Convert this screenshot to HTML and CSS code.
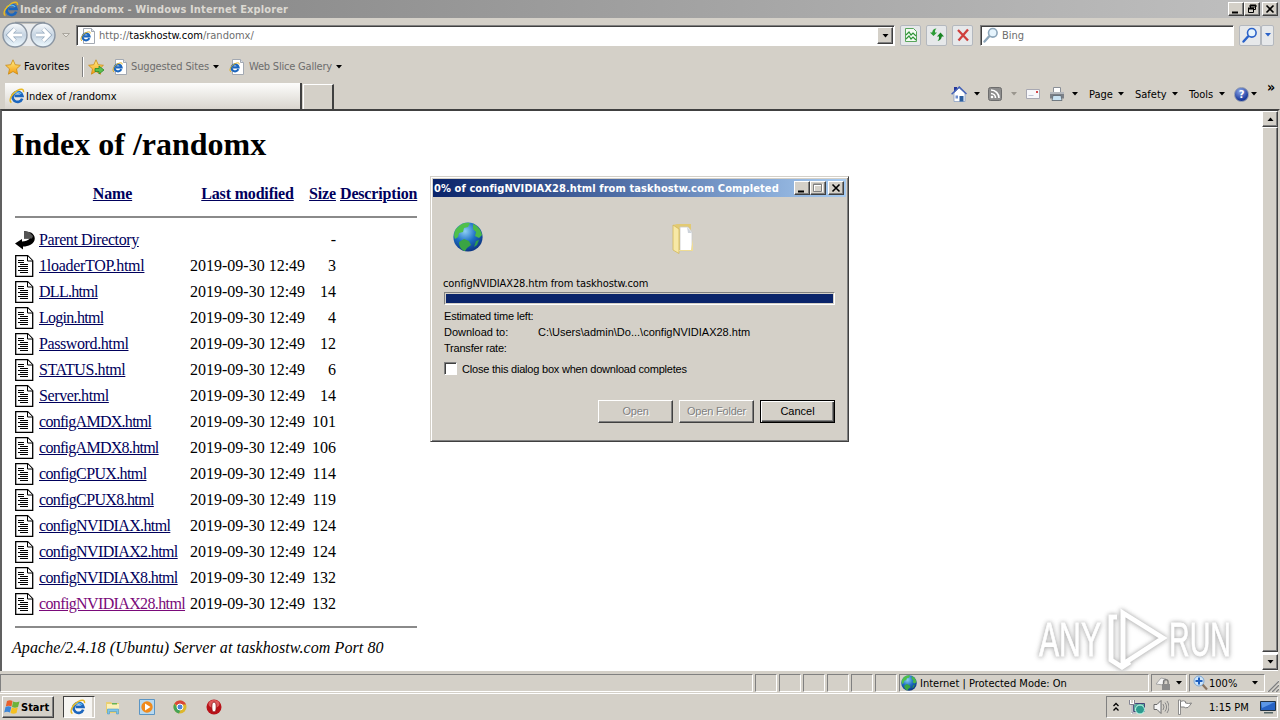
FILE: index.html
```
<!DOCTYPE html>
<html lang="en">
<head>
    <meta charset="UTF-8">
    <title>Index of /randomx</title>
    <link rel="stylesheet" href="styles.css">
</head>
<body>
    <!-- shared icons -->
    <svg class="sprite" width="0" height="0">
        <defs>
            <radialGradient id="ball" cx="40%" cy="30%" r="75%">
                <stop offset="0" stop-color="#8fd0f5"/><stop offset=".5" stop-color="#1d6fc4"/><stop offset="1" stop-color="#0a2f7c"/>
            </radialGradient>
            <linearGradient id="gold" x1="0" y1="0" x2="0" y2="1">
                <stop offset="0" stop-color="#fff08a"/><stop offset="1" stop-color="#f59a0c"/>
            </linearGradient>
            <linearGradient id="glass" x1="0" y1="0" x2="0" y2="1">
                <stop offset="0" stop-color="#fafcfe"/><stop offset=".5" stop-color="#c6d4e2"/><stop offset="1" stop-color="#effaff"/>
            </linearGradient>
        </defs>
        <symbol id="ie" viewBox="0 0 16 16">
            <path d="M13.2 10.6A5 5 0 1 1 13.4 7.9H5.5" fill="none" stroke="#1c66bd" stroke-width="2.7"/>
            <path d="M12.2 6A4.6 4.6 0 0 0 4.8 5.8" fill="none" stroke="#5bb8f2" stroke-width="1.3"/>
            <path d="M2.4 14.6C-1 12.5 3 5 8.5 2.3c3.6-1.8 6.6-1.5 6 1.8" fill="none" stroke="#e8b923" stroke-width="1.4"/>
        </symbol>
        <symbol id="iepage" viewBox="0 0 16 16">
            <path d="M3.5.5h8l3 3v12h-11z" fill="#fff" stroke="#a3a9b2"/>
            <path d="M11.5.5v3h3" fill="#dde3ea" stroke="#a3a9b2"/>
            <path d="M9.3 10.2A3.5 3.5 0 1 1 9.5 8.3H4" fill="none" stroke="#1c66bd" stroke-width="2.2"/>
            <path d="M2 13C-1 11 3 6 6 4.6c2.600-1.200 4.600-1 4.200.8" fill="none" stroke="#e0b020"/>
        </symbol>
        <symbol id="star" viewBox="0 0 16 16">
            <path d="M8 .8l2.200 4.900 5.200.6-3.900 3.600 1.100 5.300L8 12.500l-4.600 2.700 1.100-5.300L.6 6.300l5.200-.6z" fill="url(#gold)" stroke="#c98a14" stroke-width=".8"/>
        </symbol>
        <symbol id="globe" viewBox="0 0 30 30">
            <circle cx="15" cy="15" r="14.600" fill="url(#ball)"/>
            <path d="M4 6C8 1 13 0 17 1l-2 4-4 1-1 4-4 1-1 4-3 2C0 12 2 8 4 6z" fill="#4fc04a"/>
            <path d="M20 2c5 2 8 6 9 11l-3 3-4-2 1-4-3-3z" fill="#49b848"/>
            <path d="M6 20l5-3 5 2 2 4-4 3-2 3c-3-.5-6-4-6-9z" fill="#3aa544"/>
            <path d="M23 19l3-1-2 5-3 2z" fill="#2f9c50"/>
        </symbol>
        <symbol id="doc" viewBox="0 0 20 22">
            <path d="M.7.7h12l5 5v15.600H.7z" fill="#fff" stroke="#000" stroke-width="1.300"/>
            <path d="M12.500 1v5h5" fill="#fff" stroke="#000"/>
            <path d="M3 5.500h6M3 7.500h6M5 9.500h8M3 11.500h10M5 13.500h8M3 15.500h10M5 17.500h8" stroke="#000"/>
        </symbol>
        <symbol id="caret" viewBox="0 0 6 4">
            <path d="M0 0h6L3 3.500z" fill="currentColor"/>
        </symbol>
        <symbol id="lens" viewBox="0 0 16 16">
            <path d="M1.500 14.500L6 9.500" stroke="currentColor" stroke-width="2.400" stroke-linecap="round"/>
            <circle cx="9.800" cy="5.800" r="4.300" fill="#e6f4fd" stroke="currentColor" stroke-width="1.600"/>
        </symbol>
    </svg>

    <div class="titlebar">
        <svg class="i16"><use href="#ie"/></svg>
        <span class="title-text">Index of /randomx - Windows Internet Explorer</span>
        <div class="winbtns">
            <span class="winbtn"><svg viewBox="0 0 12 11"><path d="M2 8.500h6" stroke="#000" stroke-width="2"/></svg></span>
            <span class="winbtn"><svg viewBox="0 0 12 11"><path d="M4.500 1.500h5v4h-5zM4 1h6v2H4z" fill="none" stroke="#000"/><path d="M2.500 4.500h5v4h-5z" fill="#d4d0c8" stroke="#000"/><path d="M2 4.500h6" stroke="#000" stroke-width="2"/></svg></span>
            <span class="winbtn last"><svg viewBox="0 0 12 11"><path d="M2.500 1.500l7 7M9.500 1.500l-7 7" stroke="#000" stroke-width="1.600"/></svg></span>
        </div>
    </div>

    <div class="navbar">
        <svg class="travel" viewBox="0 0 70 28">
            <path d="M14 1.500h30" stroke="#8f959c" stroke-width="1.500"/>
            <path d="M16 3h26v22H16z" fill="#e9ebed"/>
            <g fill="url(#glass)" stroke="#8a95a2" stroke-width="1.400"><circle cx="14" cy="14" r="12"/><circle cx="42" cy="14" r="12"/></g>
            <g fill="none" stroke="#8ba0b6" stroke-width="4.500"><path d="M21 14H8.500M14 8l-6 6 6 6M35 14h12.500M42 8l6 6-6 6"/></g>
            <g fill="none" stroke="#fff" stroke-width="3.200"><path d="M21 14H8.500M14 8l-6 6 6 6M35 14h12.500M42 8l6 6-6 6"/></g>
            <path d="M61.500 12.500h7l-3.500 3.500z" fill="#e8e5df" stroke="#aaa69e"/>
        </svg>
        <div class="field address">
            <svg class="i16"><use href="#iepage"/></svg>
            <span class="url">http://<b>taskhostw.com</b>/randomx/</span>
            <span class="drop"><svg class="caret big"><use href="#caret"/></svg></span>
        </div>
        <span class="toolbtn"><svg viewBox="0 0 16 16"><path d="M2.500 1.500h8l3 3v10h-11z" fill="#f4fbf3" stroke="#59a55c"/><path d="M3 8l3-3 2 3 2-2 3 3M3 12l3-3 2 3 2-2 3 3" fill="none" stroke="#2f9438" stroke-width="1.200"/></svg></span>
        <span class="toolbtn"><svg viewBox="0 0 16 16"><path d="M4.500 9L1 5.500h2.200C3.500 3 5 1.500 7.500 1.500 6 3 6 4 6 5.500h2z" fill="#2c9c36"/><path d="M11.500 5.500l3.500 4h-2.200c-.3 2.500-1.800 4-4.300 4.500 1.500-1.500 1.500-2.500 1.500-4.500H8z" fill="#188423"/></svg></span>
        <span class="toolbtn"><svg viewBox="0 0 16 16"><path d="M3 3l10 10.500M13 2.500L3.500 13.500" stroke="#cf3f3c" stroke-width="2.300"/></svg></span>
        <div class="field search">
            <svg class="i16 bing"><use href="#lens"/></svg>
            <span>Bing</span>
        </div>
        <span class="toolbtn go"><svg class="blue" viewBox="0 0 16 16"><use href="#lens"/></svg></span>
        <span class="toolbtn more"><svg class="caret blue"><use href="#caret"/></svg></span>
    </div>

    <div class="favbar">
        <svg class="i16"><use href="#star"/></svg>
        <span class="fav-label">Favorites</span>
        <span class="sep"></span>
        <svg class="i16" viewBox="0 0 16 16"><use href="#star"/><path d="M7 9.500h4V7l5 4-5 4v-2.500H7z" fill="#5cc04e" stroke="#2b8a2a" stroke-width=".8"/></svg>
        <svg class="i16 link-ico"><use href="#iepage"/></svg>
        <span class="sugg">Suggested Sites</span>
        <svg class="caret"><use href="#caret"/></svg>
        <svg class="i16 link-ico2"><use href="#iepage"/></svg>
        <span class="slice">Web Slice Gallery</span>
        <svg class="caret"><use href="#caret"/></svg>
    </div>

    <div class="tabrow">
        <div class="tab">
            <svg class="i16"><use href="#ie"/></svg>
            <span class="tab-text">Index of /randomx</span>
        </div>
        <div class="newtab"></div>
        <div class="commands">
            <span class="cmd home">
                <svg class="i16" viewBox="0 0 16 16"><path d="M3 1h3v5H3z" fill="#24369c"/><path d="M3 7l5-5 6 5v8.500H3z" fill="#fff" stroke="#8aa0c4" stroke-width=".8"/><path d="M.6 8.200L8.300 1l7.200 7" fill="none" stroke="#4462b8" stroke-width="1.500"/><path d="M8.500 10h4v5.500h-4z" fill="#2c5e9e"/><path d="M4.500 9.500h2.500v3H4.500z" fill="#6d8ccc"/></svg>
                <svg class="caret"><use href="#caret"/></svg>
            </span>
            <span class="cmd feeds">
                <svg class="i14" viewBox="0 0 14 14"><rect x=".5" y=".5" width="13" height="13" rx="2" fill="#8d8d8d" stroke="#6d6d6d"/><path d="M3 3a8 8 0 0 1 8 8M3 6.500A4.500 4.500 0 0 1 7.500 11" fill="none" stroke="#fff" stroke-width="1.600"/><circle cx="4" cy="10" r="1.300" fill="#fff"/></svg>
                <svg class="caret dim"><use href="#caret"/></svg>
            </span>
            <span class="cmd mail">
                <svg class="i14" viewBox="0 0 14 14"><path d="M.5 2.500h13v9H.5z" fill="#f7f7fa" stroke="#a8a8b2"/><path d="M2.500 8.500h5" stroke="#c0c5d5"/><path d="M10 4h2v2h-2z" fill="#d5484b"/></svg>
            </span>
            <span class="cmd print">
                <svg class="i16" viewBox="0 0 16 16"><path d="M4.500 1.500h7v5h-7z" fill="#fff" stroke="#8a8f97"/><path d="M1 6h14v6.500H1z" fill="#7b8087"/><path d="M1 6h14v2H1z" fill="#b4b8bd"/><path d="M4 9.500h8l1 5H3z" fill="#c9e2f2" stroke="#5a636c" stroke-width=".8"/></svg>
                <svg class="caret"><use href="#caret"/></svg>
            </span>
            <span class="cmd page"><span>Page</span><svg class="caret"><use href="#caret"/></svg></span>
            <span class="cmd safety"><span>Safety</span><svg class="caret"><use href="#caret"/></svg></span>
            <span class="cmd tools"><span>Tools</span><svg class="caret"><use href="#caret"/></svg></span>
            <span class="cmd help">
                <span class="help-ico">?</span>
                <svg class="caret"><use href="#caret"/></svg>
            </span>
            <span class="chevron">»</span>
        </div>
    </div>

    <div class="viewport">
        <div class="document">
            <h1>Index of /randomx</h1>
            <table>
                <colgroup><col class="c-icon"><col class="c-name"><col class="c-date"><col class="c-size"><col class="c-desc"></colgroup>
                <tr><th></th><th><a>Name</a></th><th><a>Last modified</a></th><th><a>Size</a></th><th><a>Description</a></th></tr>
                <tr class="rule top"><td colspan="5"><hr></td></tr>
                <tr>
                    <td><svg viewBox="0 0 20 22"><path d="M9 2l7 1.500c5 3 5 9 0 12-3 1.600-5 2-8 2v3L0 14.500 7 10v2.500c3 0 6-1 8-3H9z" fill="#000"/><path d="M9 2l5 1 4 4-1 2.500H9z" fill="#555"/></svg></td>
                    <td><a>Parent Directory</a></td><td></td><td>-</td><td></td>
                </tr>
                <tr><td><svg><use href="#doc"/></svg></td><td><a class="wide">1loaderTOP.html</a></td><td>2019-09-30 12:49</td><td>3</td><td></td></tr>
                <tr><td><svg><use href="#doc"/></svg></td><td><a class="tight">DLL.html</a></td><td>2019-09-30 12:49</td><td>14</td><td></td></tr>
                <tr><td><svg><use href="#doc"/></svg></td><td><a class="tight">Login.html</a></td><td>2019-09-30 12:49</td><td>4</td><td></td></tr>
                <tr><td><svg><use href="#doc"/></svg></td><td><a>Password.html</a></td><td>2019-09-30 12:49</td><td>12</td><td></td></tr>
                <tr><td><svg><use href="#doc"/></svg></td><td><a>STATUS.html</a></td><td>2019-09-30 12:49</td><td>6</td><td></td></tr>
                <tr><td><svg><use href="#doc"/></svg></td><td><a>Server.html</a></td><td>2019-09-30 12:49</td><td>14</td><td></td></tr>
                <tr><td><svg><use href="#doc"/></svg></td><td><a class="tight">configAMDX.html</a></td><td>2019-09-30 12:49</td><td>101</td><td></td></tr>
                <tr><td><svg><use href="#doc"/></svg></td><td><a class="tight">configAMDX8.html</a></td><td>2019-09-30 12:49</td><td>106</td><td></td></tr>
                <tr><td><svg><use href="#doc"/></svg></td><td><a class="config">configCPUX.html</a></td><td>2019-09-30 12:49</td><td>114</td><td></td></tr>
                <tr><td><svg><use href="#doc"/></svg></td><td><a class="config">configCPUX8.html</a></td><td>2019-09-30 12:49</td><td>119</td><td></td></tr>
                <tr><td><svg><use href="#doc"/></svg></td><td><a class="config">configNVIDIAX.html</a></td><td>2019-09-30 12:49</td><td>124</td><td></td></tr>
                <tr><td><svg><use href="#doc"/></svg></td><td><a class="config">configNVIDIAX2.html</a></td><td>2019-09-30 12:49</td><td>124</td><td></td></tr>
                <tr><td><svg><use href="#doc"/></svg></td><td><a class="config">configNVIDIAX8.html</a></td><td>2019-09-30 12:49</td><td>132</td><td></td></tr>
                <tr><td><svg><use href="#doc"/></svg></td><td><a class="config visited">configNVIDIAX28.html</a></td><td>2019-09-30 12:49</td><td>132</td><td></td></tr>
                <tr class="rule"><td colspan="5"><hr></td></tr>
            </table>
            <address>Apache/2.4.18 (Ubuntu) Server at taskhostw.com Port 80</address>
        </div>
        <div class="scrollbar">
            <span class="sbtn"><svg class="caret big up"><use href="#caret"/></svg></span>
            <span class="thumb"></span>
            <span class="sbtn"><svg class="caret big"><use href="#caret"/></svg></span>
        </div>
    </div>

    <div class="statusbar">
        <span class="pane main"></span>
        <span class="pane"></span><span class="pane"></span><span class="pane"></span><span class="pane"></span><span class="pane"></span><span class="pane"></span>
        <span class="pane zone"><svg class="i16"><use href="#globe"/></svg><span>Internet | Protected Mode: On</span></span>
        <span class="pane lock"><svg class="i16" viewBox="0 0 16 16"><path d="M1 9l5-6 5 1-3 6z" fill="#f5f5f5" stroke="#a5a5a5"/><path d="M8.500 9V7a2.300 2.300 0 0 1 4.600 0v2" fill="none" stroke="#777" stroke-width="1.300"/><path d="M7 9h8v6H7z" fill="#8b8b8b"/></svg><svg class="caret"><use href="#caret"/></svg></span>
        <span class="pane zoom"><svg class="i16" viewBox="0 0 16 16"><path d="M9.500 9.500l4.500 5" stroke="#8a7460" stroke-width="2.200"/><circle cx="6" cy="6" r="5" fill="#cfe6fa" stroke="#7fa8d4"/><path d="M6 2.500v7M2.500 6h7" stroke="#1d5fc0" stroke-width="2"/></svg><span class="pct">100%</span><svg class="caret"><use href="#caret"/></svg></span>
        <svg class="grip" viewBox="0 0 13 13"><path d="M1 13L13 1M5 13l8-8M9 13l4-4" stroke="#fff"/><path d="M2 13L13 2M6 13l7-7M10 13l3-3" stroke="#808080" stroke-width="1.500"/></svg>
    </div>

    <div class="taskbar">
        <span class="start">
            <svg class="i16" viewBox="0 0 16 16"><path d="M3 2Q6 .5 8.500 2L7.500 7.500Q4.500 6 1.800 7.500z" fill="#e8602c"/><path d="M9 2.500q3 1.500 6.500 0L14 8q-3 1.500-6 0z" fill="#6cb33a"/><path d="M1.500 8Q4.500 6.500 7.300 8L6 13.500Q3 12 .2 13.500z" fill="#3c86d8"/><path d="M7.800 8.500q3 1.500 6 0l-1.300 5.500q-3 1.500-6 0z" fill="#f5c021"/></svg>
            <span>Start</span>
        </span>
        <span class="task-ie"><svg viewBox="0 0 16 16"><use href="#ie"/></svg></span>
        <svg class="i16" viewBox="0 0 16 16"><path d="M1 3h5l1 1h7v10H1z" fill="#e9cf72"/><path d="M2 5h12v6H2z" fill="#fbf0b8"/><path d="M7 4h5v1.500H7z" fill="#66b356"/><path d="M2.500 15v-5h11v5h-2v-2.500h-7V15z" fill="#7cc3ea" stroke="#3f92c5" stroke-width=".5"/></svg>
        <svg class="i16" viewBox="0 0 16 16"><path d="M.5.500h15v15H.5z" fill="#b8d9f0" stroke="#5b95c4"/><circle cx="8" cy="8" r="5.700" fill="#f08a1c"/><path d="M6 4.500L11.500 8 6 11.500z" fill="#fff"/></svg>
        <svg class="i14" viewBox="0 0 14 14"><circle cx="7" cy="7" r="6.500" fill="#ddb72c"/><path d="M7 7L1.300 3.800A6.500 6.500 0 0 1 13 4.500H7z" fill="#d9453a"/><path d="M1.300 3.800A6.500 6.500 0 0 0 6 13.400L8 9 4 7z" fill="#45a355"/><circle cx="7" cy="7" r="3" fill="#4d86d8" stroke="#fff"/></svg>
        <svg class="i16 opera" viewBox="0 0 16 16"><circle cx="8" cy="8" r="7.500" fill="#b81219"/><ellipse cx="8" cy="5" rx="5.500" ry="4" fill="#dd5a5c"/><ellipse cx="8" cy="8" rx="2.200" ry="5" fill="#fff" stroke="#8b0b10" stroke-width=".8"/></svg>
        <div class="tray">
            <svg class="up2" viewBox="0 0 6 10"><path d="M.5 4L3 1.500 5.500 4M.5 8.500L3 6l2.500 2.500" fill="none" stroke="#000" stroke-width="1.300"/></svg>
            <svg class="i16 net" viewBox="0 0 16 16"><path d="M4.500 4.500h11v8h-11z" fill="#56a99c" stroke="#447"/><circle cx="11" cy="10.500" r="4.500" fill="#2e9b8f" stroke="#cfe"/><path d="M1 1v4h4V1M3 5v9h4" fill="none" stroke="#fff" stroke-width="2.200"/><path d="M.5 1v4.500h5V1M3 5v9h4" fill="none" stroke="#667" stroke-width=".8"/></svg>
            <svg class="i16" viewBox="0 0 16 16"><path d="M1 5.500h3l4-4v13l-4-4H1z" fill="#f5f5f5" stroke="#6b6b6b"/><path d="M10 5q2 3 0 6M12 3.500q3.200 4.500 0 9M14 2q4 6 0 12" fill="none" stroke="#888"/></svg>
            <svg class="i16 flag" viewBox="0 0 16 16"><path d="M1.500 1h2v14.500h-2z" fill="#fff" stroke="#777" stroke-width=".8"/><path d="M3.500 2.500q3-1.500 5 0v1.500q3 1 6 0-2 3-3.500 4.500-3 .8-4-.5h-3.500z" fill="#fff" stroke="#777" stroke-width=".9"/></svg>
            <span class="clock">1:15 PM</span>
            <svg class="i16" viewBox="0 0 16 16"><path d="M.5 2.500h15v9H.5z" fill="#2763c4" stroke="#234"/><path d="M1 3h14L2 9z" fill="#5c97e6"/><path d="M4 13h9v1.500H4z" fill="#566"/></svg>
        </div>
    </div>

    <div class="dialog">
        <div class="dlg-title">
            <span class="dlg-caption">0% of configNVIDIAX28.html from taskhostw.com Completed</span>
            <div class="winbtns">
                <span class="winbtn"><svg viewBox="0 0 12 11"><path d="M2 8.500h6" stroke="#000" stroke-width="2"/></svg></span>
                <span class="winbtn"><svg viewBox="0 0 12 11"><path d="M2.500 1.500h8v7h-8zM2 2.500h9" fill="none" stroke="#fff"/><path d="M1.500 1h8v7.500h-8zM1 1.500h9" fill="none" stroke="#808080"/></svg></span>
                <span class="winbtn last"><svg viewBox="0 0 12 11"><path d="M2.500 1.500l7 7M9.500 1.500l-7 7" stroke="#000" stroke-width="1.600"/></svg></span>
            </div>
        </div>
        <div class="dlg-icons">
            <svg class="dlg-globe"><use href="#globe"/></svg>
            <svg class="dlg-folder" viewBox="0 0 22 31">
                <path d="M1 2l4-1h14v27H4z" fill="#e2ca74"/>
                <path d="M8 4h8l4 5v19H8z" fill="#fff" stroke="#c9c9c9" stroke-width=".8"/>
                <path d="M15 4l5 6h-4z" fill="#cdd3da"/>
                <path d="M1 2l6 4v24.500L1 27z" fill="#f7e8a6" stroke="#d3b758" stroke-width=".8"/>
                <path d="M7 27h12l2-11v12H7z" fill="#efdc94"/>
            </svg>
        </div>
        <div class="dlg-file">configNVIDIAX28.htm from taskhostw.com</div>
        <div class="progress"></div>
        <div class="info">
            <span class="lbl">Estimated time left:</span><span></span>
            <span>Download to:</span><span>C:\Users\admin\Do...\configNVIDIAX28.htm</span>
            <span class="lbl">Transfer rate:</span><span></span>
        </div>
        <div class="check"><span class="box"></span><span class="lbl">Close this dialog box when download completes</span></div>
        <div class="buttons">
            <span class="btn off">Open</span>
            <span class="btn off">Open Folder</span>
            <span class="btn default">Cancel</span>
        </div>
    </div>

    <svg class="watermark" viewBox="0 0 214 76">
        <g class="mark">
            <text x="9" y="54" textLength="62" lengthAdjust="spacingAndGlyphs">ANY</text>
            <text x="139" y="54" textLength="62" lengthAdjust="spacingAndGlyphs">RUN</text>
            <path d="M93 11l40 25-40 26zM87 15h-6v43l11 7 8-5"/>
        </g>
    </svg>
</body>
</html>
```
FILE: styles.css
```
* {
    box-sizing: border-box;
}
body {
    margin: 0;
    width: 1280px;
    height: 720px;
    overflow: hidden;
    position: relative;
    display: flex;
    flex-direction: column;
    background: #d4d0c8;
    font-family: "DejaVu Sans Condensed", "DejaVu Sans", sans-serif;
    font-stretch: condensed;
    font-size: 11px;
    color: #000;
    white-space: nowrap;
}
svg {
    display: block;
    flex: none;
}
.sprite {
    position: absolute;
}
.i16 {
    width: 16px;
    height: 16px;
}
.i14 {
    width: 14px;
    height: 14px;
}
.caret {
    width: 6px;
    height: 4px;
}
.caret.big {
    width: 7px;
    height: 4px;
}
.up {
    transform: rotate(180deg);
}
.dim {
    color: #9a968e;
}
.blue {
    color: #2a62c9;
}

/* title bar */
.titlebar {
    height: 18px;
    display: flex;
    align-items: center;
    padding-left: 3px;
    background: linear-gradient(90deg, #808080, #c0c0c0);
}
.title-text {
    flex: 1;
    margin-left: 1px;
    font-weight: bold;
    letter-spacing: 0.13px;
    color: #dcd9d2;
}
.winbtns {
    display: flex;
    padding-right: 2px;
}
.winbtn {
    width: 16px;
    height: 14px;
    padding: 1px;
    background: #d4d0c8;
    border: 1px solid;
    border-color: #fff #404040 #404040 #fff;
    box-shadow: inset -1px -1px #808080;
}
.winbtn svg {
    width: 12px;
    height: 11px;
}
.winbtn.last {
    margin-left: 2px;
}

/* address row */
.navbar {
    height: 36px;
    display: flex;
    align-items: center;
    padding: 0 6px 2px 1px;
}
.travel {
    width: 70px;
    height: 28px;
    margin-right: 5px;
}
.field {
    height: 21px;
    display: flex;
    align-items: center;
    background: #fff;
    border: 1px solid;
    border-color: #808080 #fff #fff #808080;
    box-shadow: inset 1px 1px #404040;
    color: #6d6d6d;
}
.address {
    width: 819px;
    padding: 1px 1px 0 3px;
    margin-right: 5px;
}
.url {
    flex: 1;
    margin-left: 3px;
}
.url b {
    font-weight: normal;
    color: #000;
}
.drop {
    width: 16px;
    height: 17px;
    display: flex;
    align-items: center;
    justify-content: center;
    background: #d4d0c8;
    border: 1px solid;
    border-color: #fff #404040 #404040 #fff;
    box-shadow: inset -1px -1px #808080;
    color: #000;
}
.toolbtn {
    width: 21px;
    height: 21px;
    margin-right: 5px;
    display: flex;
    align-items: center;
    justify-content: center;
    background: #e6e8ea;
    border: 1px solid #b4b8be;
    border-radius: 2px;
}
.toolbtn svg:not(.caret) {
    width: 16px;
    height: 16px;
}
.search {
    width: 254px;
    margin: 0 5px 0 2px;
    padding-left: 2px;
}
.search span {
    margin-left: 3px;
}
.bing {
    color: #8da6ba;
}
.toolbtn.go {
    width: 22px;
    margin-right: 0;
}
.toolbtn.more {
    width: 13px;
    margin-right: 0;
}

/* favourites */
.favbar {
    height: 27px;
    display: flex;
    align-items: center;
    padding: 0 0 2px 5px;
    color: #6d6d6d;
}
.fav-label {
    width: 58px;
    margin-left: 3px;
    letter-spacing: 0.1px;
    color: #000;
}
.favbar .caret {
    color: #000;
}
.sep {
    width: 2px;
    height: 20px;
    margin-right: 4px;
    border-left: 1px solid #808080;
    border-right: 1px solid #fff;
}
.link-ico {
    margin-left: 8px;
}
.link-ico2 {
    margin-left: 10px;
}
.sugg {
    width: 82px;
    margin-left: 3px;
    letter-spacing: -0.13px;
}
.slice {
    width: 87px;
    margin-left: 4px;
    letter-spacing: -0.2px;
}

/* tabs and command bar */
.tabrow {
    height: 28px;
    display: flex;
    align-items: flex-end;
    padding-left: 5px;
}
.tab {
    width: 297px;
    height: 26px;
    display: flex;
    align-items: center;
    padding-left: 4px;
    background: linear-gradient(#fdfdfc, #d9d5ce);
    border-right: 2px solid #404040;
}
.tab-text {
    margin-left: 1px;
}
.newtab {
    width: 31px;
    height: 25px;
    margin-left: 1px;
    border: 1px solid #fff;
    border-bottom: 0;
    border-right: 2px solid #404040;
}
.commands {
    flex: 1;
    height: 28px;
    display: flex;
    align-items: center;
    justify-content: flex-end;
    padding-bottom: 2px;
}
.cmd {
    display: flex;
    align-items: center;
    justify-content: space-between;
}
.home {
    width: 29px;
    margin-right: 8px;
}
.feeds {
    width: 29px;
    margin-right: 9px;
}
.print {
    width: 29px;
    margin: 0 11px 0 9px;
}
.page {
    width: 35px;
    margin-right: 11px;
}
.safety {
    width: 43px;
    margin-right: 11px;
}
.tools {
    width: 36px;
    margin-right: 9px;
}
.help {
    width: 23px;
    margin-right: 10px;
}
.help-ico {
    width: 15px;
    height: 15px;
    border-radius: 50%;
    background: radial-gradient(circle at 40% 25%, #8da8ea, #1a3a9c 70%);
    border: 1px solid #8d97ae;
    color: #fff;
    font-weight: bold;
    line-height: 13px;
    text-align: center;
}
.chevron {
    width: 13px;
    font-size: 14px;
    line-height: 14px;
    padding-bottom: 14px;
    font-weight: bold;
}

/* document */
.viewport {
    height: 562px;
    display: flex;
    background: #fff;
    border-top: 2px solid #404040;
    border-left: 2px solid #606060;
    border-right: 2px solid #d4d0c8;
}
.document {
    flex: 1;
    padding: 15px 10px 0;
    font-family: "Liberation Serif", "Times New Roman", serif;
    font-size: 16px;
}
h1 {
    margin: 0 0 18px;
    font-size: 32px;
    line-height: 36px;
}
table {
    table-layout: fixed;
    width: 408px;
    border-spacing: 2px;
}
.c-icon { width: 22px; }
.c-name { width: 149px; }
.c-date { width: 117px; }
.c-size { width: 29px; }
.c-desc { width: 79px; }
td, th {
    height: 24px;
    padding: 1px;
    line-height: 18px;
}
th {
    letter-spacing: -0.17px;
}
td:nth-child(4) {
    text-align: right;
}
td svg {
    width: 20px;
    height: 22px;
}
.rule td {
    height: 17px;
    padding: 0 1px;
}
.top td {
    height: 18px;
    padding-bottom: 1px;
}
hr {
    margin: 0;
    height: 2px;
    border: 0;
    background: #8a8a8a;
}
a {
    color: #00005c;
    text-decoration: underline;
}
td a {
    letter-spacing: -0.4px;
}
.wide {
    letter-spacing: -0.27px;
}
.config {
    letter-spacing: -0.63px;
}
.tight {
    letter-spacing: -0.72px;
}
.visited {
    color: #7a0a7a;
}
address {
    margin-top: 1px;
    line-height: 20px;
    letter-spacing: 0.1px;
}
.scrollbar {
    width: 16px;
    display: flex;
    flex-direction: column;
    padding-bottom: 1px;
}
.sbtn, .thumb {
    display: flex;
    align-items: center;
    justify-content: center;
    background: #d4d0c8;
    border: 1px solid;
    border-color: #fff #404040 #404040 #fff;
    box-shadow: inset -1px -1px #808080;
}
.sbtn {
    height: 16px;
}
.thumb {
    flex: 1;
    margin-bottom: 2px;
}

/* status bar */
.statusbar {
    height: 23px;
    display: flex;
    gap: 2px;
    padding: 3px 0 1px;
    border-bottom: 1px solid #fff;
}
.pane {
    flex: none;
    width: 22px;
    display: flex;
    align-items: center;
    border: 1px solid;
    border-color: #808080 #fff #fff #808080;
}
.main {
    width: 753px;
}
.zone {
    width: 250px;
    padding-left: 1px;
    gap: 3px;
}
.lock {
    width: 36px;
    padding: 0 4px 0 3px;
    justify-content: space-between;
}
.zoom {
    width: 76px;
    padding: 0 6px 0 3px;
}
.pct {
    flex: 1;
}
.grip {
    width: 13px;
    height: 13px;
    align-self: flex-end;
    margin-left: -1px;
}

/* taskbar */
.taskbar {
    height: 26px;
    display: flex;
    align-items: center;
    padding: 0 2px;
}
.start {
    width: 52px;
    height: 22px;
    display: flex;
    align-items: center;
    gap: 1px;
    padding-left: 1px;
    border: 1px solid;
    border-color: #fff #404040 #404040 #fff;
    box-shadow: inset -1px -1px #808080;
    font-weight: bold;
}
.task-ie {
    width: 32px;
    height: 22px;
    margin: 0 10px 0 9px;
    padding: 2px 6px;
    background: #f6f5f2;
    border: 1px solid;
    border-color: #404040 #fff #fff #404040;
    box-shadow: inset -2px 0 #d4d0c8;
}
.task-ie svg {
    width: 16px;
    height: 16px;
}
.taskbar > .i16 {
    margin-right: 18px;
}
.taskbar > .opera {
    margin-left: 19px;
}
.tray {
    width: 172px;
    height: 22px;
    margin-left: auto;
    display: flex;
    align-items: center;
    padding: 0 1px 0 6px;
    border: 1px solid;
    border-color: #808080 #fff #fff #808080;
}
.up2 {
    width: 6px;
    height: 10px;
}
.net {
    margin: 0 8px 0 10px;
}
.flag {
    margin-left: 8px;
}
.clock {
    width: 52px;
    margin-left: 16px;
}

/* download dialog */
.dialog {
    position: absolute;
    left: 430px;
    top: 176px;
    width: 419px;
    height: 266px;
    padding: 2px;
    background: #d4d0c8;
    border: 1px solid;
    border-color: #d4d0c8 #404040 #404040 #d4d0c8;
    box-shadow: inset 1px 1px #fff, inset -1px -1px #808080;
    font-family: "Liberation Sans", Arial, sans-serif;
}
.dlg-title {
    height: 18px;
    display: flex;
    align-items: center;
    justify-content: space-between;
    padding-left: 1px;
    background: linear-gradient(90deg, #0a246a, #a6caf0);
    font-family: "DejaVu Sans Condensed", "DejaVu Sans", sans-serif;
}
.dlg-caption {
    color: #fff;
    font-weight: bold;
    letter-spacing: 0.1px;
}
.dlg-icons {
    display: flex;
    height: 32px;
    margin: 25px 0 22px 20px;
}
.dlg-globe {
    width: 30px;
    height: 30px;
}
.dlg-folder {
    width: 22px;
    height: 31px;
    margin: 1px 0 0 189px;
}
.dlg-file {
    margin-left: 10px;
    height: 16px;
    line-height: 16px;
    font-family: "DejaVu Sans Condensed", "DejaVu Sans", sans-serif;
    letter-spacing: -0.12px;
}
.progress {
    width: 391px;
    height: 13px;
    margin: 0 0 3px 11px;
    background: #0a246a;
    border: 1px solid;
    border-color: #808080 #fff #fff #808080;
    box-shadow: inset 0 0 0 1px #d4d0c8;
}
.info {
    display: grid;
    grid-template-columns: 94px 1fr;
    grid-auto-rows: 16px;
    line-height: 16px;
    margin-left: 11px;
}
.lbl {
    letter-spacing: -0.21px;
}
.check {
    display: flex;
    align-items: center;
    gap: 5px;
    margin: 6px 0 0 11px;
}
.box {
    width: 13px;
    height: 13px;
    background: #fff;
    border: 1px solid;
    border-color: #808080 #fff #fff #808080;
    box-shadow: inset 1px 1px #404040;
}
.buttons {
    display: flex;
    gap: 6px;
    margin: 25px 0 0 165px;
}
.btn {
    width: 75px;
    height: 23px;
    line-height: 20px;
    text-align: center;
    border: 1px solid;
    border-color: #fff #404040 #404040 #fff;
    box-shadow: inset -1px -1px #808080;
}
.off {
    color: #808080;
    text-shadow: 1px 1px #fff;
    letter-spacing: -0.2px;
}
.default {
    border-color: #000;
    box-shadow: inset 1px 1px #fff, inset -1px -1px #404040, inset -2px -2px #808080;
}

/* watermark */
.watermark {
    position: absolute;
    left: 1030px;
    top: 602px;
    width: 214px;
    height: 76px;
    filter: drop-shadow(0 0 2px #b0b0b0) drop-shadow(0 1px 2px #d8d8d8);
}
.mark {
    font-family: "Liberation Sans", sans-serif;
    font-size: 48px;
    fill: #fff;
    stroke: #fff;
    stroke-width: 0.8;
}
.mark path {
    fill: none;
    stroke-width: 5;
}
```
